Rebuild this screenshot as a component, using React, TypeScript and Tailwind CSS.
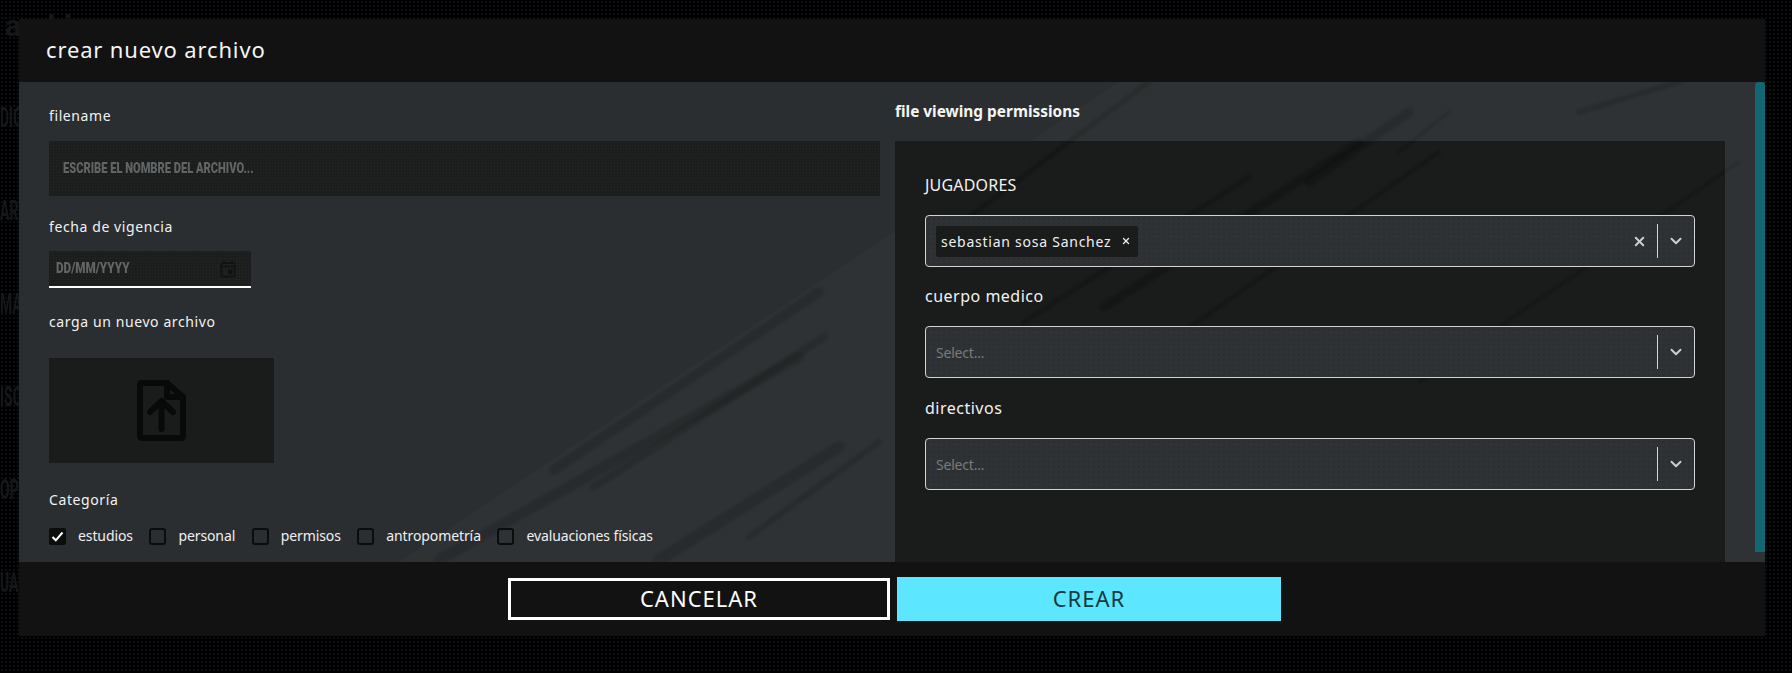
import { ChevronDown, X } from 'lucide-react';
import { MdOutlineEvent } from 'react-icons/md';

const sidebarItems = ['DIO', 'AR', 'MA', 'ISC', 'OPO', 'UAC'];

const categories = [
  { name: 'estudios', checked: true },
  { name: 'personal', checked: false },
  { name: 'permisos', checked: false },
  { name: 'antropometría', checked: false },
  { name: 'evaluaciones físicas', checked: false },
];

// diagonal brush strokes behind the form, in modal body coordinates
const streaks = [
  { d: 'M 535 388 L 800 210', w: 10 },
  { d: 'M 575 405 L 805 255', w: 8 },
  { d: 'M 420 478 L 780 275', w: 11 },
  { d: 'M 640 478 L 820 365', w: 12 },
  { d: 'M 730 455 L 860 360', w: 6 },
  { d: 'M 1005 240 L 1230 95', w: 5 },
  { d: 'M 1085 225 L 1340 60', w: 9 },
  { d: 'M 1150 260 L 1420 70', w: 4 },
  { d: 'M 1290 100 L 1390 30', w: 10 },
  { d: 'M 1400 300 L 1720 80', w: 3 },
  { d: 'M 930 150 L 1130 0', w: 5 },
  { d: 'M 1560 30 L 1660 0', w: 6 },
  { d: 'M 1380 70 L 1430 30', w: 3 },
];

function Streaks({ viewBox, opacity }: { viewBox: string; opacity: number }) {
  return (
    <svg className="absolute inset-0 h-full w-full blur-[1px]" viewBox={viewBox} aria-hidden="true">
      {streaks.map((s) => (
        <path key={s.d} d={s.d} stroke="#000" strokeOpacity={opacity} strokeWidth={s.w} strokeLinecap="round" fill="none" />
      ))}
    </svg>
  );
}

function Label({ children }: { children: React.ReactNode }) {
  return <p className="text-[14px] leading-[20px] tracking-[0.6px] text-[#f2f2f2]">{children}</p>;
}

function SelectBox({ chip }: { chip?: string }) {
  return (
    <div className="flex h-[52px] items-center rounded-[4px] border border-[#d4d4d4] bg-[#2f3234] bg-[radial-gradient(#2a2d2f_1px,transparent_1px)] bg-[length:5px_5px]">
      <div className="flex-1 pl-[10px]">
        {chip ? (
          <span className="inline-flex h-[31px] items-center gap-[10px] rounded-[2px] bg-[#1a1b1b] pl-[5px] pr-[7px] text-[14px] tracking-[0.75px] text-[#f0f0f0]">
            {chip}
            <X className="h-[10px] w-[10px]" strokeWidth={3} />
          </span>
        ) : (
          <span className="text-[14px] tracking-[-0.2px] text-[#7a7a7a]">Select...</span>
        )}
      </div>
      {chip && <X className="mr-[10px] h-[15px] w-[15px] text-[#cfcfcf]" strokeWidth={3.2} />}
      <div className="h-[34px] w-px bg-[#d4d4d4]" />
      <div className="flex w-[36px] justify-center">
        <ChevronDown className="h-[18px] w-[18px] text-[#cfcfcf]" strokeWidth={2.6} />
      </div>
    </div>
  );
}

export default function App() {
  return (
    <div className="relative h-[673px] w-[1792px] overflow-hidden bg-black bg-[radial-gradient(#0b1014_1px,transparent_1px)] bg-[length:4px_4px] font-['Noto_Sans',sans-serif]">
      {/* page behind the modal */}
      <div className="pt-[8px] font-['Roboto',sans-serif] font-bold whitespace-nowrap text-[#15181a]">
        <p className="ml-[5px] h-[95px] text-[30px] leading-[36px]">archivos</p>
        <div className="flex w-[19px] flex-col gap-[64px] overflow-hidden text-[28px] leading-[29px]">
          {sidebarItems.map((item) => (
            <p key={item} className="origin-left scale-x-[0.5]">{item}</p>
          ))}
        </div>
      </div>

      {/* modal */}
      <div className="absolute top-[19px] left-[19px] flex h-[617px] w-[1746px] flex-col bg-[#121212]">
        <div className="flex h-[63px] shrink-0 items-center pb-[2px] pl-[27px] text-[22px] tracking-[0.85px] text-[#f5f5f5]">
          crear nuevo archivo
        </div>

        <div className="relative flex h-[480px] shrink-0 overflow-hidden bg-[#2a2e30]">
          <svg className="absolute inset-0" width="1746" height="480" viewBox="0 0 1746 480" aria-hidden="true">
            <polygon points="380,480 1100,0 1746,0 1746,480" fill="#fff" fillOpacity="0.025" />
          </svg>
          <Streaks viewBox="0 0 1746 480" opacity={0.13} />

          <div className="relative grid h-full flex-1 grid-cols-[831px_830px] gap-x-[15px] pl-[30px]">
            {/* left column */}
            <div className="pt-[24px]">
              <Label>filename</Label>
              <div className="mt-[15px] flex h-[55px] items-center bg-[#1c1e1e] bg-[radial-gradient(#252727_1px,transparent_1px)] bg-[length:3px_3px] pl-[14px] font-['Roboto',sans-serif] text-[15px] font-black text-[#626565]">
                <span className="origin-left scale-x-[0.74] whitespace-nowrap">ESCRIBE EL NOMBRE DEL ARCHIVO...</span>
              </div>

              <div className="mt-[21px]">
                <Label>fecha de vigencia</Label>
              </div>
              <div className="mt-[14px] flex h-[37px] w-[202px] items-center border-b-2 border-white bg-[#1c1e1e] bg-[radial-gradient(#252727_1px,transparent_1px)] bg-[length:3px_3px] pr-[13px] pl-[7px] font-['Roboto',sans-serif] text-[15px] font-black text-[#626565]">
                <span className="flex-1 origin-left scale-x-[0.78] whitespace-nowrap">DD/MM/YYYY</span>
                <MdOutlineEvent className="h-[20px] w-[20px] text-[#101111]" />
              </div>

              <div className="mt-[24px]">
                <Label>carga un nuevo archivo</Label>
              </div>
              <div className="mt-[26px] flex h-[105px] w-[225px] items-center justify-center bg-[#1a1b1b]">
                <svg width="49" height="61" viewBox="0 0 49 61" fill="none" stroke="#080909" strokeWidth="6" strokeLinejoin="round" strokeLinecap="round">
                  <path d="M30 3 H5 Q3 3 3 5 V56 Q3 58 5 58 H44 Q46 58 46 56 V17 Z" />
                  <path d="M30 3 V17 H46" />
                  <path d="M24.5 49 V22 M13 32 L24.5 21 L36 32" />
                </svg>
              </div>

              <div className="mt-[27px]">
                <Label>Categoría</Label>
              </div>
              <div className="mt-[16px] flex items-center gap-[16.5px]">
                {categories.map((cat) => (
                  <div key={cat.name} className="flex items-center gap-[12px]">
                    <span className="flex h-[17px] w-[17px] items-center justify-center rounded-[3px] border-2 border-[#0b0c0c] bg-transparent">
                      {cat.checked && (
                        <span className="flex h-[17px] w-[17px] shrink-0 items-center justify-center rounded-[3px] bg-[#0b0c0c]">
                          <svg width="13" height="11" viewBox="0 0 13 11" fill="none">
                            <path d="M1.5 6 L4.8 9.3 L11.5 1.5" stroke="#fff" strokeWidth="2" />
                          </svg>
                        </span>
                      )}
                    </span>
                    <span className="text-[14px] leading-[20px] tracking-[-0.1px] text-[#f0f0f0]">{cat.name}</span>
                  </div>
                ))}
              </div>
            </div>

            {/* right column */}
            <div className="flex flex-col">
              <p className="flex h-[59px] items-start pt-[20px] text-[15.4px] leading-[20px] font-bold text-[#f5f5f5]">
                file viewing permissions
              </p>
              <div className="relative flex-1 overflow-hidden bg-[#1a1c1c]">
                <Streaks viewBox="876 59 830 421" opacity={0.2} />
                <div className="relative px-[30px] pt-[33px]">
                  <p className="text-[16px] leading-[22px] tracking-[0.2px] text-[#f2f2f2]">JUGADORES</p>
                  <div className="mt-[19px]">
                    <SelectBox chip="sebastian sosa Sanchez" />
                  </div>
                  <p className="mt-[18px] text-[16px] leading-[22px] tracking-[0.5px] text-[#f2f2f2]">cuerpo medico</p>
                  <div className="mt-[19px]">
                    <SelectBox />
                  </div>
                  <p className="mt-[19px] text-[16px] leading-[22px] tracking-[0.5px] text-[#f2f2f2]">directivos</p>
                  <div className="mt-[19px]">
                    <SelectBox />
                  </div>
                </div>
              </div>
            </div>
          </div>

          {/* scrollbar */}
          <div className="relative w-[10px] shrink-0">
            <div className="h-[470px] rounded-t-[4px] bg-[#136673]" />
          </div>
        </div>

        <div className="flex flex-1 items-center justify-center gap-[7px] pl-[5px]">
          <button className="flex h-[42px] w-[382px] items-center justify-center border-[3px] border-white pb-[2px] text-[22px] tracking-[1px] text-white">
            CANCELAR
          </button>
          <button className="flex h-[44px] w-[384px] items-center justify-center bg-[#5ce6ff] pb-[2px] text-[22px] tracking-[1px] text-[#16383f]">
            CREAR
          </button>
        </div>
      </div>
    </div>
  );
}
